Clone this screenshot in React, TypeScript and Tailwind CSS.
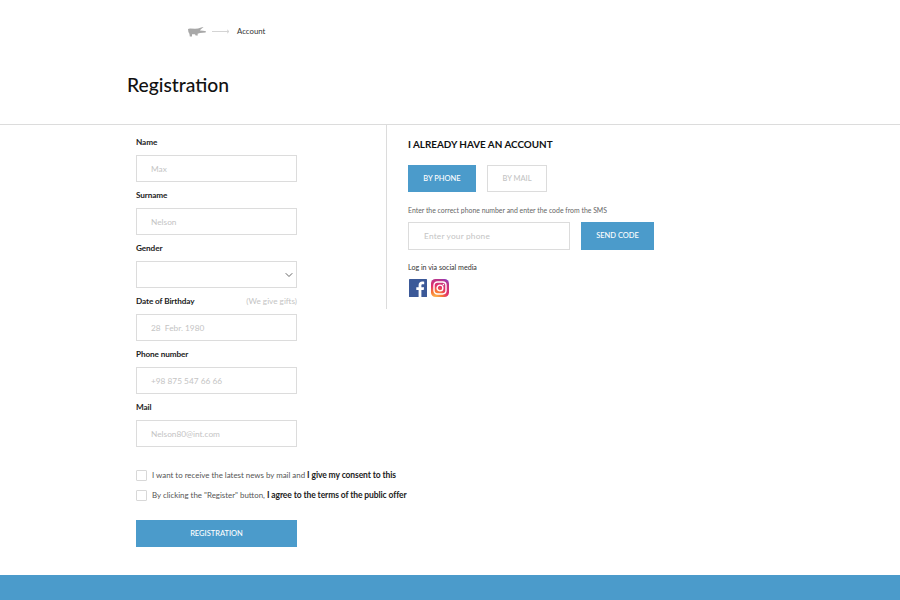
import { useState } from "react";
import { ChevronDown } from "lucide-react";

// Lacoste style croc, small and grey
function CrocLogo() {
  return (
    <svg width="18" height="10" viewBox="0 0 18 10" fill="#a8a8a8">
      <path d="M0 2 L2 1.4 L7 1.8 L10 1.6 L14 0.2 L15.6 0 L12.6 2.4 L12 3.4 L15 3.8 L18 4.2 L17.6 5.6 L12 6 L9.6 6.8 L9.8 8.6 L7.6 8.6 L7 7.2 L4 7.2 L4 9.4 L1.8 9.4 L1.4 6.8 L0.4 5 Z" />
    </svg>
  );
}

function ArrowLine() {
  return (
    <svg width="18" height="5" viewBox="0 0 18 5" fill="none" stroke="#d4d4d4" strokeWidth="1">
      <path d="M0 2.5 H17 M15 0.8 L17 2.5 L15 4.2" />
    </svg>
  );
}

function FacebookIcon() {
  return (
    <svg width="18" height="18" viewBox="0 0 18 18">
      <rect width="18" height="18" fill="#3b5998" rx="0.5" />
      <path d="M12.4 18 V11 H14.7 L15.1 8.2 H12.4 V6.5 C12.4 5.7 12.7 5.2 13.8 5.2 H15.2 V2.7 C14.9 2.7 14.1 2.6 13.2 2.6 C11.1 2.6 9.6 3.9 9.6 6.2 V8.2 H7.3 V11 H9.6 V18 Z" fill="#fff" />
    </svg>
  );
}

function InstagramIcon() {
  return (
    <svg width="18" height="18" viewBox="0 0 18 18" fill="none">
      <defs>
        <radialGradient id="ig" cx="0.25" cy="1.05" r="1.25">
          <stop offset="0" stopColor="#fec053" />
          <stop offset="0.3" stopColor="#f77737" />
          <stop offset="0.55" stopColor="#e1306c" />
          <stop offset="0.8" stopColor="#c13584" />
          <stop offset="1" stopColor="#7a3fd0" />
        </radialGradient>
      </defs>
      <rect width="18" height="18" rx="4.5" fill="url(#ig)" />
      <rect x="3" y="3" width="12" height="12" rx="3.4" stroke="#fff" strokeWidth="1.4" />
      <circle cx="9" cy="9" r="2.9" stroke="#fff" strokeWidth="1.4" />
      <circle cx="12.4" cy="5.6" r="0.8" fill="#fff" />
    </svg>
  );
}

function Field({ label, placeholder, aside }: { label: string; placeholder: string; aside?: string }) {
  return (
    <div>
      <div className="flex justify-between items-center h-[13px] pt-[2px] text-[8.2px] leading-[11px] tracking-[-0.1px] font-bold text-[#222]">
        <span>{label}</span>
        {aside && <span className="font-normal tracking-normal text-[8.2px] text-[#c4c4c4]">{aside}</span>}
      </div>
      <input
        placeholder={placeholder}
        className="mt-[7px] mb-[6px] block w-[161px] h-[27px] border border-[#dcdcdc] bg-white pl-[14px] text-[8.3px] outline-none placeholder:text-[#c4c4c4]"
      />
    </div>
  );
}

function Check({ children }: { children: React.ReactNode }) {
  const [on, setOn] = useState(false);
  return (
    <label className="flex items-center gap-[5px] h-[11px] text-[7.9px] text-[#555] whitespace-nowrap">
      <input
        type="checkbox"
        checked={on}
        onChange={() => setOn(!on)}
        className="appearance-none shrink-0 w-[11px] h-[11px] border border-[#d8d8d8] rounded-[1px] bg-white"
      />
      <span>{children}</span>
    </label>
  );
}

export default function App() {
  const [tab, setTab] = useState("phone");
  return (
    <div className="h-[600px] overflow-hidden bg-white flex flex-col font-['Lato','Noto_Sans',sans-serif]">
      <header className="h-[125px] border-b border-[#dcdcdc] pl-[127px] shrink-0">
        <div className="flex items-center pl-[61px] pt-[26px] h-[37px]">
          <CrocLogo />
          <span className="ml-[6px] flex"><ArrowLine /></span>
          <span className="ml-[7px] text-[7.8px] text-[#333]">Account</span>
        </div>
        <h1 className="mt-[33px] text-[19.3px] leading-[30px] font-medium text-[#111]">Registration</h1>
      </header>

      <main className="flex-1 flex pl-[136px]">
        <section className="w-[250px] pt-[10px] shrink-0">
          <Field label="Name" placeholder="Max" />
          <Field label="Surname" placeholder="Nelson" />
          <div>
            <div className="h-[13px] pt-[2px] text-[8.2px] leading-[11px] tracking-[-0.1px] font-bold text-[#222]">Gender</div>
            <div className="mt-[7px] mb-[6px] flex items-center justify-end w-[161px] h-[27px] border border-[#dcdcdc] pr-[1px]">
              <ChevronDown size={12} color="#666" />
            </div>
          </div>
          <div className="w-[161px]">
            <Field label="Date of Birthday" placeholder="28  Febr. 1980" aside="(We give gifts)" />
          </div>
          <Field label="Phone number" placeholder="+98 875 547 66 66" />
          <Field label="Mail" placeholder="Nelson80@int.com" />
          <div className="mt-[23px] flex flex-col gap-[9px]">
            <Check>
              I want to receive the latest news by mail and <b className="text-[8.5px] font-bold tracking-[-0.1px] text-[#222]">I give my consent to this</b>
            </Check>
            <Check>
              By clicking the "Register" button, <b className="text-[8.5px] font-bold tracking-[-0.1px] text-[#222]">I agree to the terms of the public offer</b>
            </Check>
          </div>
          <button className="mt-[19px] w-[161px] h-[27px] bg-[#4b9bcb] text-white text-[7.5px] font-medium">REGISTRATION</button>
        </section>

        <section className="h-[184px] border-l border-[#dcdcdc] pl-[21px] pt-[12px]">
          <h2 className="text-[9.9px] leading-[14px] font-bold text-[#111]">I ALREADY HAVE AN ACCOUNT</h2>
          <div className="mt-[14px] flex gap-[11px]">
            <button
              onClick={() => setTab("phone")}
              className="w-[68px] h-[27px] bg-[#4b9bcb] text-white text-[7.5px] font-medium"
            >
              BY PHONE
            </button>
            <button
              onClick={() => setTab("mail")}
              className="w-[60px] h-[27px] border border-[#dcdcdc] text-[#c4c4c4] text-[7.5px] font-medium"
              data-active={tab}
            >
              BY MAIL
            </button>
          </div>
          <p className="mt-[13px] text-[6.9px] leading-[11px] text-[#666]">
            Enter the correct phone number and enter the code from the SMS
          </p>
          <div className="mt-[6px] flex gap-[11px]">
            <input
              placeholder="Enter your phone"
              className="w-[162px] h-[28px] border border-[#dcdcdc] pl-[15px] text-[8.3px] tracking-[0.2px] outline-none placeholder:text-[#c4c4c4]"
            />
            <button className="w-[73px] h-[28px] bg-[#4b9bcb] text-white text-[7.5px] font-medium">SEND CODE</button>
          </div>
          <p className="mt-[12px] text-[7.1px] leading-[11px] text-[#333]">Log in via social media</p>
          <div className="mt-[6px] ml-[1px] flex gap-[4px]">
            <FacebookIcon />
            <InstagramIcon />
          </div>
        </section>
      </main>

      <footer className="h-[25px] bg-[#4b9bcb] shrink-0" />
    </div>
  );
}
